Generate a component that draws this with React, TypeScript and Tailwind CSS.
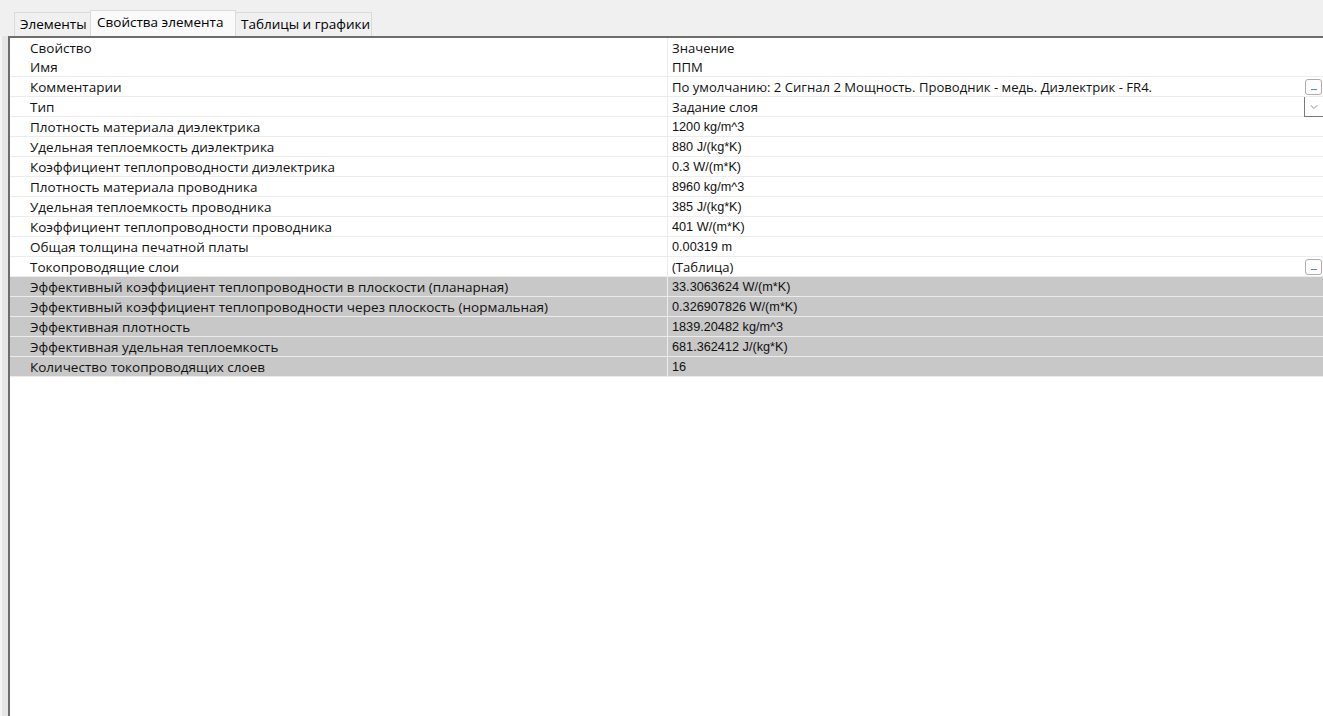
import { ChevronDown } from 'lucide-react';

type Row = { name: string; value: string; calc?: boolean; button?: 'dots' | 'select' };

const rows: Row[] = [
  { name: 'Свойство', value: 'Значение' },
  { name: 'Имя', value: 'ППМ' },
  { name: 'Комментарии', value: 'По умолчанию: 2 Сигнал 2 Мощность. Проводник - медь. Диэлектрик - FR4.', button: 'dots' },
  { name: 'Тип', value: 'Задание слоя', button: 'select' },
  { name: 'Плотность материала диэлектрика', value: '1200 kg/m^3' },
  { name: 'Удельная теплоемкость диэлектрика', value: '880 J/(kg*K)' },
  { name: 'Коэффициент теплопроводности диэлектрика', value: '0.3 W/(m*K)' },
  { name: 'Плотность материала проводника', value: '8960 kg/m^3' },
  { name: 'Удельная теплоемкость проводника', value: '385 J/(kg*K)' },
  { name: 'Коэффициент теплопроводности проводника', value: '401 W/(m*K)' },
  { name: 'Общая толщина печатной платы', value: '0.00319 m' },
  { name: 'Токопроводящие слои', value: '(Таблица)', button: 'dots' },
  { name: 'Эффективный коэффициент теплопроводности в плоскости (планарная)', value: '33.3063624 W/(m*K)', calc: true },
  { name: 'Эффективный коэффициент теплопроводности через плоскость (нормальная)', value: '0.326907826 W/(m*K)', calc: true },
  { name: 'Эффективная плотность', value: '1839.20482 kg/m^3', calc: true },
  { name: 'Эффективная удельная теплоемкость', value: '681.362412 J/(kg*K)', calc: true },
  { name: 'Количество токопроводящих слоев', value: '16', calc: true },
];

const uiFont = { fontFamily: '"Open Sans", "Liberation Sans", sans-serif' };
const numFont = { fontFamily: '"Liberation Sans", Arial, sans-serif' };

// кириллица в значении — другой шрифт
const hasCyr = (s: string) => /[а-яА-ЯёЁ]/.test(s);

const DotsButton = () => (
  <div className="absolute right-[1px] top-[2px] h-[16px] w-[17px] rounded-[3px] border border-[#adadad] bg-[#fdfdfd] flex items-end justify-center pb-[4px]">
    <div className="h-[1px] w-[6px] bg-[#3d8ee0]" />
  </div>
);

const SelectButton = () => (
  <div className="absolute right-0 top-0 h-[20px] w-[19px] border-l border-b border-[#7a7a7a] bg-white flex items-center justify-center">
    <ChevronDown size={12} strokeWidth={1.2} className="text-[#444]" />
  </div>
);

export default function App() {
  return (
    <div className="w-[1323px] h-[716px] bg-[#f0f0f0] overflow-hidden relative" style={uiFont}>
      {/* вкладки */}
      <div className="flex items-end h-[36px] pl-[14px] pt-[10px]">
        <div className="h-[24px] w-[77px] pl-[5px] border border-b-0 border-[#dadada] bg-[#f0f0f0] text-[13.5px] text-black flex items-center whitespace-nowrap">Элементы</div>
        <div className="h-[26px] w-[146px] pl-[6px] border border-b-0 border-[#dadada] bg-[#fafafa] text-[13.5px] text-black flex items-center -mx-[1px] relative z-10 pb-[2px] whitespace-nowrap">Свойства элемента</div>
        <div className="h-[24px] w-[137px] pl-[5px] border border-b-0 border-[#dadada] bg-[#f0f0f0] text-[13.5px] text-black flex items-center whitespace-nowrap">Таблицы и графики</div>
      </div>

      <div className="flex h-[680px]">
        <div className="w-[8px] border-l-2 border-[#f5f5f5] bg-[#e6e6e6]" />
        <div className="flex-1 bg-white border-l-2 border-t-2 border-[#6d6d6d]">
          {rows.map((r, i) => (
            <div
              key={i}
              className={`flex ${i === 0 ? 'h-[19px]' : 'h-[20px] border-b border-[#ececec]'} ${r.calc ? 'bg-[#c8c8c8]' : ''}`}
            >
              <div className="w-[657px] shrink-0 pl-[20px] leading-[20px] text-[13.5px] text-[#111] whitespace-nowrap">{r.name}</div>
              <div
                className={`flex-1 relative border-l border-[#ececec] pl-[4px] leading-[20px] text-[#111] whitespace-nowrap ${hasCyr(r.value) ? 'text-[13.1px]' : 'text-[12.7px]'}`}
                style={hasCyr(r.value) ? uiFont : numFont}
              >
                {r.value}
                {r.button === 'dots' && <DotsButton />}
                {r.button === 'select' && <SelectButton />}
              </div>
            </div>
          ))}
        </div>
      </div>
    </div>
  );
}
